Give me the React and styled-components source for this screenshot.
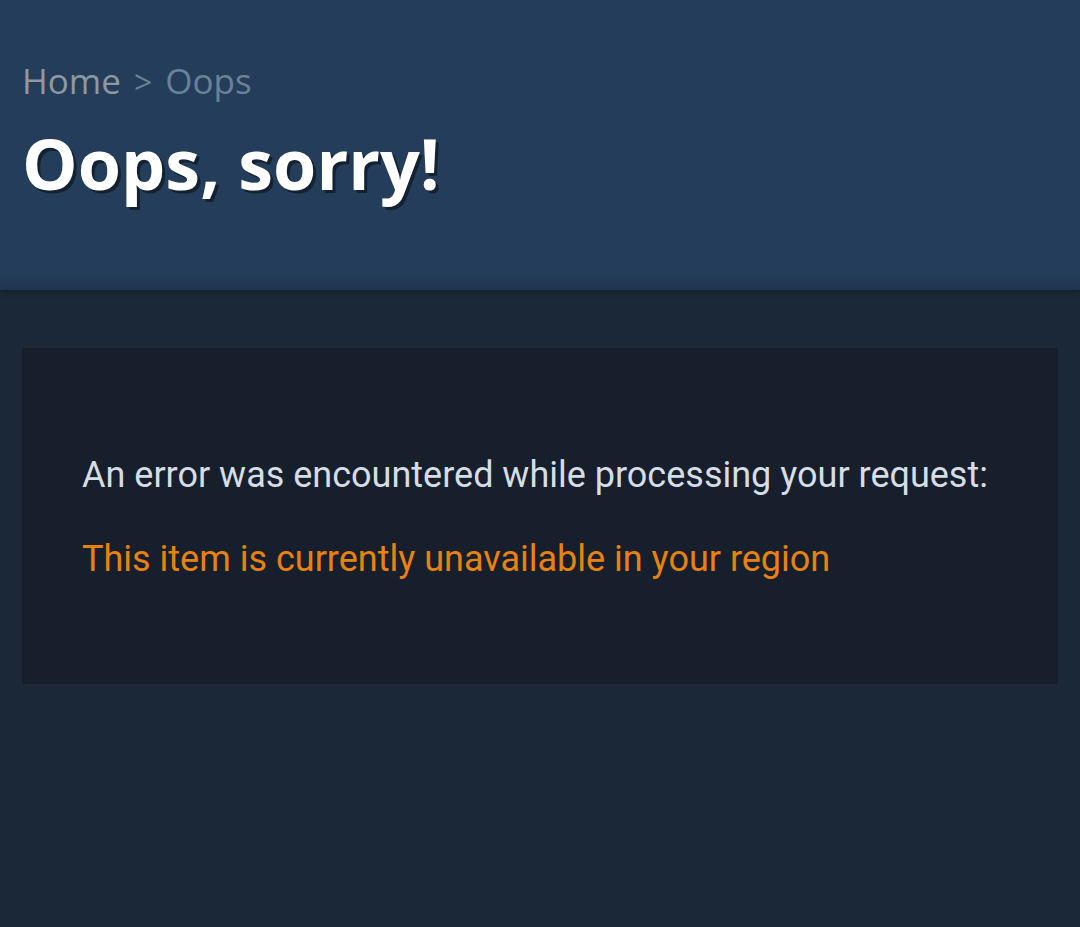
import React from 'react'
import styled, { createGlobalStyle } from 'styled-components'

const GlobalStyle = createGlobalStyle`
  html, body {
    margin: 0;
    padding: 0;
    background-color: #1b2838;
  }
`

export default function App() {
  return (
    <Page>
      <GlobalStyle />
      <Header>
        <Breadcrumbs>
          <Crumb>Home</Crumb>
          <Separator>&gt;</Separator>
          <Crumb current>Oops</Crumb>
        </Breadcrumbs>
        <Title>Oops, sorry!</Title>
      </Header>

      <Content>
        <ErrorBox>
          <ErrorIntro>An error was encountered while processing your request:</ErrorIntro>
          <ErrorMessage>This item is currently unavailable in your region</ErrorMessage>
        </ErrorBox>
      </Content>
    </Page>
  )
}

const Page = styled.div`
  min-height: 927px;
  background-color: #1b2838;
`

const Header = styled.div`
  height: 290px;
  box-sizing: border-box;
  padding: 56px 22px 0;
  background: linear-gradient(to bottom, #233d5a 0%, #233d5a 94%, #1f3450 100%);
  box-shadow: 0 2px 6px rgba(0, 0, 0, 0.25);
`

const Breadcrumbs = styled.div`
  display: flex;
  align-items: baseline;
  gap: 13px;
  font-family: "Open Sans", "Liberation Sans", sans-serif;
  font-size: 35px;
  line-height: 50px;
`

const Crumb = styled.span`
  color: ${p => (p.current ? '#6a8198' : '#8f98a0')};
`

const Separator = styled.span`
  color: #6a8198;
  font-size: 32px;
`

const Title = styled.h1`
  margin: 14px 0 0;
  font-family: "Open Sans", "Liberation Sans", sans-serif;
  font-weight: 700;
  font-size: 70px;
  line-height: 84px;
  color: #ffffff;
  text-shadow: 3px 3px 0 rgba(0, 0, 0, 0.45);
`

const Content = styled.div`
  padding: 58px 22px 0;
`

const ErrorBox = styled.div`
  height: 336px;
  box-sizing: border-box;
  padding: 102px 60px 0;
  background-color: #171f2c;
`

const ErrorIntro = styled.div`
  font-family: Roboto, "Liberation Sans", sans-serif;
  font-size: 36px;
  line-height: 50px;
  color: #d6dde4;
`

const ErrorMessage = styled.div`
  margin-top: 34px;
  font-family: Roboto, "Liberation Sans", sans-serif;
  font-size: 36px;
  line-height: 50px;
  color: #e8820f;
`
